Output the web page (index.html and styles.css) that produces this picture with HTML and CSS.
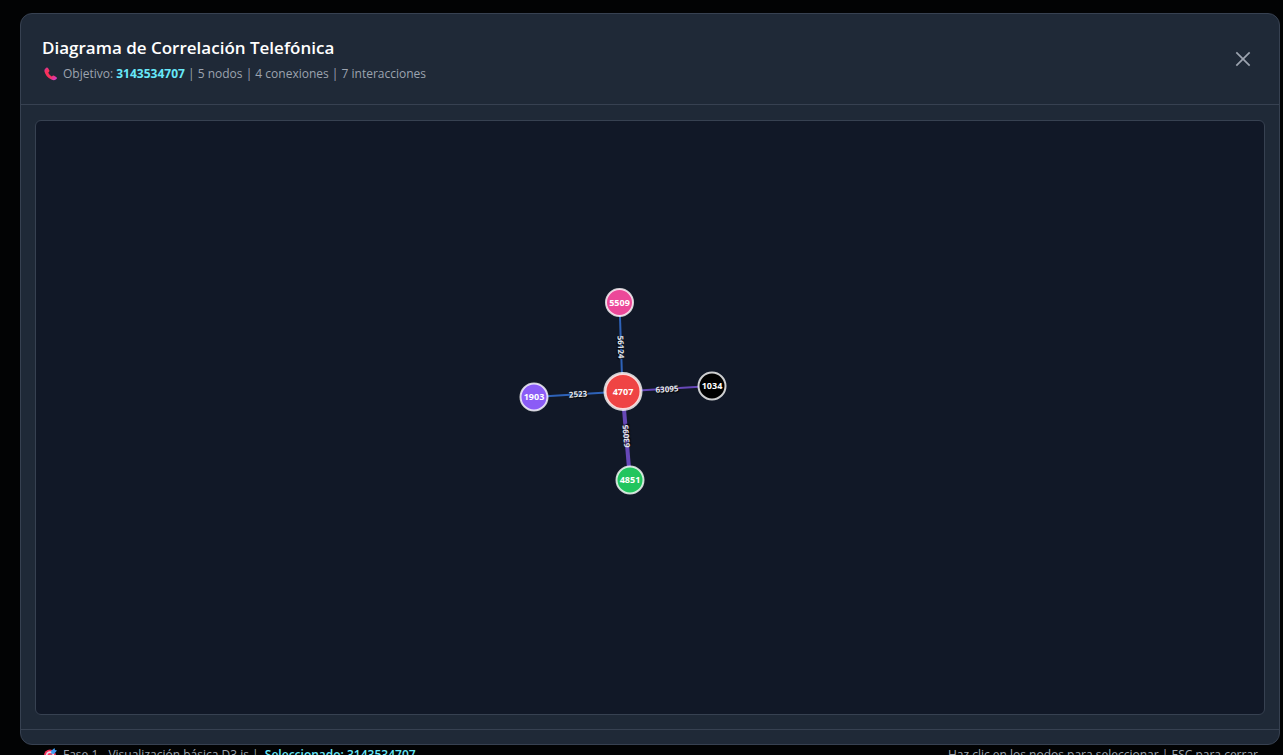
FILE: index.html
```html
<!DOCTYPE html>
<html lang="es">
<head>
<meta charset="utf-8">
<title>Diagrama de Correlación Telefónica</title>
<link rel="stylesheet" href="styles.css">
</head>
<body>
<main class="overlay">
  <section class="dialog" role="dialog" aria-labelledby="dialog-title">
    <header class="dialog-header">
      <div>
        <h1 class="title" id="dialog-title">Diagrama de Correlación Telefónica</h1>
        <p class="line">
          <svg class="emoji" viewBox="0 0 16 16" aria-hidden="true">
            <defs><linearGradient id="phone" x1="0" y1="0" x2="1" y2="1"><stop offset="0" stop-color="#c239b3"/><stop offset=".25" stop-color="#f8315a"/><stop offset=".6" stop-color="#f8315a"/><stop offset=".9" stop-color="#d63bc0"/></linearGradient></defs>
            <path fill="url(#phone)" d="M3.2 2.7 4.6 1.6Q5.4 1.2 6 2L7.4 4.5Q7.7 5.4 6.9 6.1L6.2 6.8Q7.4 9.2 9.8 10.4L10.6 9.8Q11.3 9.2 12.2 9.7L14.5 11.2Q15.4 12 14.7 12.8L13.4 13.8Q11.9 14.6 9.4 13.5C5.5 11.7 3 8.3 2.4 5.2Q2.2 3.5 3.2 2.7Z"/>
          </svg>
          <span>Objetivo: <strong class="accent">3143534707</strong> | 5 nodos | 4 conexiones | 7 interacciones</span>
        </p>
      </div>
      <button class="close" type="button" aria-label="Cerrar">
        <svg viewBox="0 0 24 24" aria-hidden="true"><path d="M4 4 20 20M20 4 4 20"/></svg>
      </button>
    </header>
    <div class="dialog-body">
      <div class="canvas">
        <svg class="graph" viewBox="0 0 1228 593" role="img" aria-label="Diagrama de nodos">
          <g class="links">
            <path class="blue" d="M586.5 270.5 583.5 181.5"/>
            <path class="blue" d="M586.5 270.5 498 276"/>
            <path class="purple" d="M586.5 270.5 675.5 265"/>
            <path class="purple strong" d="M586.5 270.5 594 359"/>
          </g>
          <g class="link-labels">
            <text transform="translate(585 226) rotate(88)" y="3">56124</text>
            <text transform="translate(542 273) rotate(-4)" y="3">2523</text>
            <text transform="translate(631 268) rotate(-4)" y="3">63095</text>
            <text transform="translate(590 315) rotate(-95)" y="3">63095</text>
          </g>
          <g class="nodes">
            <circle class="main" cx="587" cy="270.5" r="18" fill="#ef4444"/>
            <circle cx="583.5" cy="181.5" r="13.5" fill="#ec4899"/>
            <circle cx="498" cy="276" r="13.5" fill="#8b5cf6"/>
            <circle cx="676" cy="265" r="13.5" fill="#000"/>
            <circle cx="594" cy="359" r="13.5" fill="#22c55e"/>
          </g>
          <g class="node-labels">
            <text x="587" y="274">4707</text>
            <text x="583.5" y="185">5509</text>
            <text x="498" y="279">1903</text>
            <text x="676" y="268">1034</text>
            <text x="594" y="362">4851</text>
          </g>
        </svg>
      </div>
    </div>
    <footer class="dialog-footer">
      <p class="line">
        <svg class="emoji" viewBox="0 0 16 16" aria-hidden="true">
          <circle cx="8" cy="8.5" r="6" fill="#f8315a"/><circle cx="8" cy="8.5" r="4.2" fill="#e8d9ea"/><circle cx="8" cy="8.5" r="2.6" fill="#f8315a"/>
          <path d="M8 8.5 12 4" stroke="#6d7fa8"/><path fill="#3f9df5" d="M9 4 12.5 1 13 3 15 3.5 12 7 9.5 6.5Z"/>
        </svg>
        <span>Fase 1 - Visualización básica D3.js |&nbsp; <strong class="selected">Seleccionado: 3143534707</strong></span>
      </p>
      <p class="line">Haz clic en los nodos para seleccionar | ESC para cerrar</p>
    </footer>
  </section>
</main>
</body>
</html>
```
FILE: styles.css
```css
* { box-sizing: border-box; }
body {
  margin: 0;
  overflow: hidden;
  background: #020304;
  color: #9ca3af;
  font: 12px/20px "Segoe UI", "Open Sans", "Noto Sans", sans-serif;
}
.overlay {
  display: flex;
  height: 100vh;
  padding: 13px 3px 10px 20px;
}
.dialog {
  flex: 1;
  min-width: 0;
  display: flex;
  flex-direction: column;
  background: #1f2937;
  border: 1px solid #374151;
  border-radius: 12px;
}
.dialog-header {
  display: flex;
  justify-content: space-between;
  align-items: center;
  padding: 20px 20px 20px 21px;
  border-bottom: 1px solid #374151;
}
.title {
  margin: 0;
  color: #fff;
  font-size: 17px;
  line-height: 28px;
  font-weight: 600;
}
.line {
  display: flex;
  align-items: center;
  gap: 5px;
  margin: 0;
  padding-top: 2px;
  white-space: nowrap;
}
.emoji { width: 16px; height: 16px; }
.accent { color: #67e8f9; font-weight: 700; }
.selected { color: #67e8f9; font-weight: 600; }
.close {
  width: 32px;
  height: 32px;
  padding: 6px;
  border: 0;
  background: none;
  color: #9ca3af;
}
.close svg { display: block; width: 100%; }
.close path { fill: none; stroke: currentColor; stroke-width: 2; }
.dialog-body {
  flex: 1;
  min-height: 0;
  display: flex;
  padding: 15px 14px 14px;
}
.canvas {
  flex: 1;
  min-width: 0;
  overflow: hidden;
  background: #111827;
  border: 1px solid #374151;
  border-radius: 6px;
}
.graph { display: block; width: 100%; height: 100%; }
.links path { fill: none; stroke-width: 2; opacity: 0.7; }
.links .blue { stroke: #3b82f6; }
.links .purple { stroke: #8b5cf6; }
.links .strong { stroke-width: 4; }
.graph text { text-anchor: middle; font-weight: 700; }
.link-labels text { font-size: 8px; fill: #e5e7eb; text-shadow: 1px 1px 1px #000; }
.nodes circle { stroke: #fff; stroke-opacity: 0.8; stroke-width: 2; }
.nodes .main { stroke-width: 3; }
.node-labels text { font-size: 9px; fill: #fff; }
.dialog-footer {
  flex: none;
  display: flex;
  justify-content: space-between;
  align-items: flex-start;
  height: 15px;
  padding: 13px 21px 0;
  border-top: 1px solid #374151;
}
```
